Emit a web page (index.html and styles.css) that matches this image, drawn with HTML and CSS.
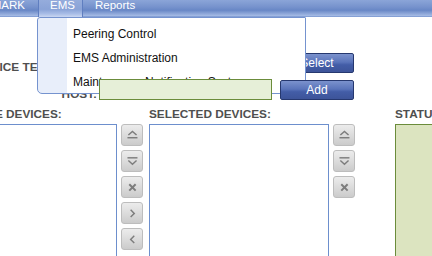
FILE: index.html
```html
<!DOCTYPE html>
<html lang="en">
<head>
    <meta charset="UTF-8">
    <meta name="viewport" content="width=device-width, initial-scale=1.0">
    <title>EMS - Device Selection</title>
    <link rel="stylesheet" href="styles.css">
</head>
<body>

    <header class="topbar">
        <nav class="nav">
            <a class="nav-item nav-first">BENCHMARK</a>
            <a class="nav-item active">EMS</a>
            <a class="nav-item">Reports</a>
        </nav>
        <ul class="dropdown">
            <li>Peering Control</li>
            <li>EMS Administration</li>
            <li>Maintenance Notification System</li>
        </ul>
    </header>

    <main class="page">
        <div class="form-row">
            <label class="field-label">DEVICE TEMPLATES:</label>
            <div class="select-box"></div>
            <button class="btn-blue">Select</button>
        </div>
        <div class="form-row">
            <label class="field-label">HOST:</label>
            <input class="input-green" type="text">
            <button class="btn-blue btn-front">Add</button>
        </div>

        <div class="lists">
            <div class="list-col">
                <div class="list-label">AVAILABLE DEVICES:</div>
                <div class="list-box"></div>
            </div>
            <div class="tool-col">
                <button class="tool-btn" title="Move to top">
                    <svg viewBox="0 0 22 22"><path d="M7 11 L11.5 7 L16 11"/><path d="M6 14 H17"/></svg>
                </button>
                <button class="tool-btn" title="Move to bottom">
                    <svg viewBox="0 0 22 22"><path d="M6 7.5 H17"/><path d="M7 10.5 L11.5 14.5 L16 10.5"/></svg>
                </button>
                <button class="tool-btn" title="Remove">
                    <svg viewBox="0 0 22 22"><path class="thick" d="M8 8 L15 15 M15 8 L8 15"/></svg>
                </button>
                <button class="tool-btn" title="Add">
                    <svg viewBox="0 0 22 22"><path d="M9.5 7.5 L13.5 11.5 L9.5 15.5"/></svg>
                </button>
                <button class="tool-btn" title="Remove">
                    <svg viewBox="0 0 22 22"><path d="M13.5 7.5 L9.5 11.5 L13.5 15.5"/></svg>
                </button>
            </div>
            <div class="list-col">
                <div class="list-label">SELECTED DEVICES:</div>
                <div class="list-box"></div>
            </div>
            <div class="tool-col tool-col-wide">
                <button class="tool-btn" title="Move to top">
                    <svg viewBox="0 0 22 22"><path d="M7 11 L11.5 7 L16 11"/><path d="M6 14 H17"/></svg>
                </button>
                <button class="tool-btn" title="Move to bottom">
                    <svg viewBox="0 0 22 22"><path d="M6 7.5 H17"/><path d="M7 10.5 L11.5 14.5 L16 10.5"/></svg>
                </button>
                <button class="tool-btn" title="Remove">
                    <svg viewBox="0 0 22 22"><path class="thick" d="M8 8 L15 15 M15 8 L8 15"/></svg>
                </button>
            </div>
            <div class="status-col">
                <div class="list-label">STATUS:</div>
                <div class="status-box"></div>
            </div>
        </div>
    </main>

</body>
</html>
```

FILE: styles.css
```css
body {
    margin: 0;
    font-family: "Liberation Sans", Arial, sans-serif;
    background-color: #fff;
    overflow: hidden;
    width: 432px;
    height: 256px;
}
.topbar {
    position: relative;
    height: 17px;
    background: linear-gradient(to bottom, #8ba5d8 0%, #7793cd 40%, #6887c6 60%, #a3b9e4 92%, #7492cd 100%);
}
.nav {
    display: flex;
    height: 17px;
}
.nav-item {
    display: flex;
    flex: none;
    box-sizing: border-box;
    height: 17px;
    padding: 0 12px;
    font-size: 11.5px;
    line-height: 11px;
    color: #fff;
    white-space: nowrap;
}
.nav-first {
    width: 38px;
    justify-content: flex-end;
    padding-right: 13px;
}
.nav-item.active {
    padding: 0 11px 0 11px;
    width: 45px;
    border-left: 1px solid #5f7ec0;
    border-right: 1px solid #5f7ec0;
    background: linear-gradient(to bottom, #95acdc 0%, #8aa3d7 55%, #a7bce6 80%, #c9d6f1 100%);
}
.dropdown {
    position: absolute;
    left: 37px;
    top: 17px;
    z-index: 10;
    box-sizing: border-box;
    width: 269px;
    height: 77px;
    margin: 0;
    padding: 4px 0 0 0;
    list-style: none;
    border: 1px solid #7593cf;
    border-radius: 3px 1px 0 5px;
    background: linear-gradient(to right, #e8eefa 0, #e8eefa 29px, #fff 29px);
}
.dropdown li {
    height: 24px;
    line-height: 24px;
    padding-left: 35px;
    font-size: 12px;
    color: #111;
    white-space: nowrap;
}
.page {
    width: 600px;
    margin-left: -63px;
    padding-top: 35px;
}
.form-row {
    display: flex;
    align-items: flex-start;
    height: 21px;
    margin-bottom: 6px;
}
.field-label {
    flex: none;
    box-sizing: border-box;
    width: 162px;
    padding: 9px 2px 0 0;
    text-align: right;
    font-size: 11.8px;
    font-weight: bold;
    line-height: 13px;
    color: #4f4f4f;
    white-space: nowrap;
}
.select-box {
    flex: none;
    box-sizing: border-box;
    width: 173px;
    height: 21px;
    border: 1px solid #7593cf;
}
.input-green {
    flex: none;
    position: relative;
    z-index: 20;
    box-sizing: border-box;
    width: 173px;
    height: 21px;
    margin: 0;
    border: 1px solid #6b8c3b;
    background-color: #e6efd8;
}
.btn-blue {
    flex: none;
    box-sizing: border-box;
    width: 74px;
    height: 20px;
    margin: 1px 0 0 8px;
    padding: 0;
    border: 1px solid #26386f;
    border-radius: 2px;
    background: linear-gradient(to bottom, #7b92cd 0%, #5a74ba 45%, #435da7 60%, #3d5499 100%);
    color: #fff;
    font-family: "Liberation Sans", Arial, sans-serif;
    font-size: 12px;
}
.btn-front {
    position: relative;
    z-index: 20;
}
.lists {
    display: flex;
}
.list-col {
    flex: none;
    width: 180px;
}
.list-label {
    height: 16px;
    margin-bottom: 2px;
    font-size: 11.8px;
    font-weight: bold;
    line-height: 16px;
    color: #4f4f4f;
    white-space: nowrap;
}
.list-box {
    box-sizing: border-box;
    height: 140px;
    border: 1px solid #6d8fcd;
    background-color: #fff;
}
.tool-col {
    flex: none;
    display: flex;
    flex-direction: column;
    gap: 4px;
    width: 22px;
    margin: 0 6px 0 4px;
    padding-top: 18px;
}
.tool-col-wide {
    margin-right: 40px;
}
.tool-btn {
    box-sizing: border-box;
    width: 22px;
    height: 22px;
    padding: 0;
    border: 1px solid #bdbdbd;
    border-radius: 3px;
    background: linear-gradient(to bottom, #ececec 0%, #dcdcdc 50%, #cbcbcb 100%);
}
.tool-btn svg {
    display: block;
    width: 20px;
    height: 20px;
    fill: none;
    stroke: #7d7d7d;
    stroke-width: 1.6;
}
.tool-btn svg .thick {
    stroke-width: 2.2;
}
.status-col {
    flex: none;
    width: 100px;
}
.status-box {
    box-sizing: border-box;
    height: 140px;
    border: 1px solid #6b8c3b;
    background-color: #dce4c0;
}
```
